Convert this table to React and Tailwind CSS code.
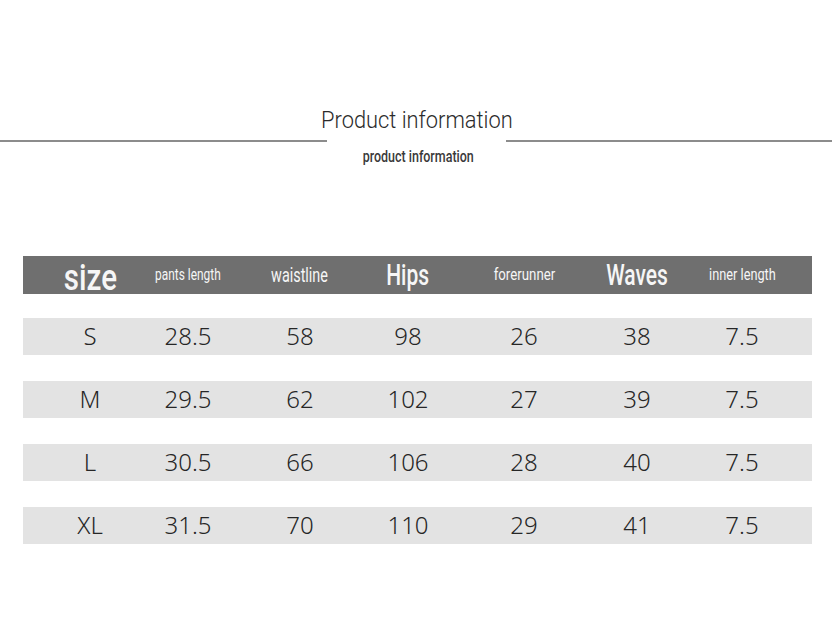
import React from "react";

const cols = "grid grid-cols-[134px_62px_162px_54px_178px_48px_162px]";
const rows = [
  ["S", "28.5", "58", "98", "26", "38", "7.5"],
  ["M", "29.5", "62", "102", "27", "39", "7.5"],
  ["L", "30.5", "66", "106", "28", "40", "7.5"],
  ["XL", "31.5", "70", "110", "29", "41", "7.5"],
];

function H({ children, cls }) {
  return (
    <div className="flex justify-center whitespace-nowrap">
      <span className={"inline-block font-['Roboto',sans-serif] text-[#f6f6f6] " + cls}>{children}</span>
    </div>
  );
}

export default function App() {
  return (
    <div className="w-[832px] h-[624px] bg-white overflow-hidden">
      <div className="pt-[106px] text-center leading-[30px] text-[23px] font-light text-[#2b2b2b] font-['Roboto',sans-serif]">
        <span className="inline-block scale-x-[0.95] translate-x-[1px]">Product information</span>
      </div>
      <div className="flex items-center mt-[4px]">
        <div className="w-[327px] h-[2px] bg-[#8c8c8c]" />
        <div className="flex-1" />
        <div className="w-[326px] h-[2px] bg-[#8c8c8c]" />
      </div>
      <div className="mt-[5px] text-center leading-[20px] text-[16px] font-medium text-[#3a3a3a] font-['Roboto',sans-serif]">
        <span className="inline-block scale-x-[0.78] translate-x-[2px]">product information</span>
      </div>

      <div className="mt-[89px] ml-[23px] w-[789px]">
        <div className={cols + " h-[38px] bg-[#6f6f6f] items-center"}>
          <H cls="self-end text-[36px] leading-[36px] font-medium scale-x-[0.82] translate-y-[3px]">size</H>
          <H cls="text-[17px] leading-[20px] scale-x-[0.7] -translate-y-[1px]">pants length</H>
          <H cls="text-[20px] leading-[22px] scale-x-[0.72]">waistline</H>
          <H cls="text-[30px] leading-[34px] font-medium scale-x-[0.7]">Hips</H>
          <H cls="text-[17px] leading-[20px] scale-x-[0.78] -translate-y-[1px]">forerunner</H>
          <H cls="text-[30px] leading-[34px] font-medium scale-x-[0.7]">Waves</H>
          <H cls="text-[17px] leading-[20px] scale-x-[0.75] -translate-y-[1px]">inner length</H>
        </div>
        {rows.map((r, i) => (
          <div
            key={i}
            className={cols + " h-[37px] bg-[#e3e3e3] items-center " + (i === 0 ? "mt-[24px]" : "mt-[26px]")}
          >
            {r.map((v, j) => (
              <div key={j} className="flex justify-center whitespace-nowrap">
                <span className="font-['Noto_Sans',sans-serif] font-light text-[24px] leading-[30px] text-[#262626] -translate-y-[1px]">{v}</span>
              </div>
            ))}
          </div>
        ))}
      </div>
    </div>
  );
}
